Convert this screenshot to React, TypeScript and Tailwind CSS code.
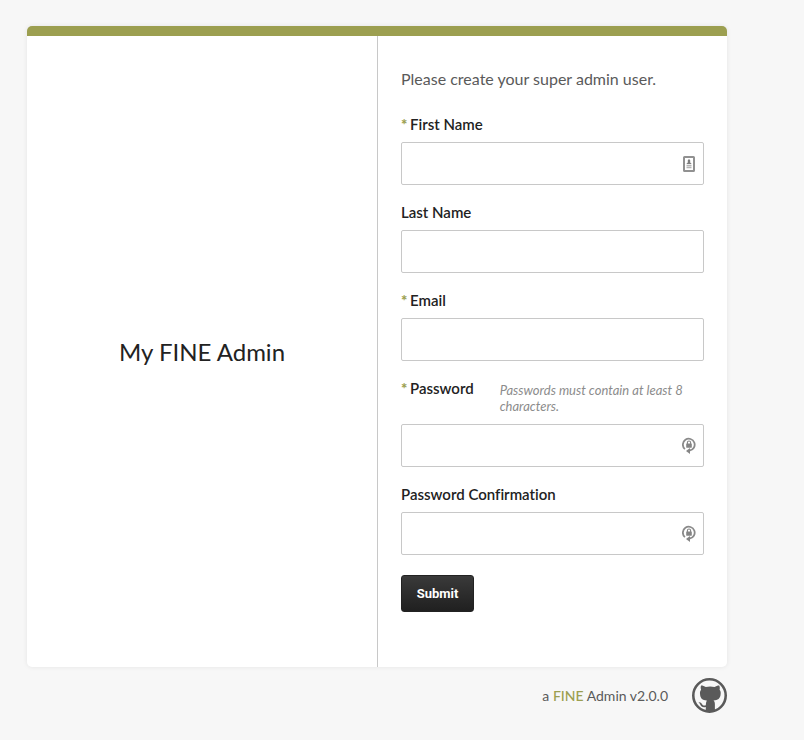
import type { ReactNode } from "react";

function ContactIcon() {
  return (
    <svg viewBox="0 0 12 16" className="h-4 w-3" aria-hidden="true">
      <rect x="1" y="1" width="10" height="14" rx="0.5" fill="#fff" stroke="#919191" strokeWidth="2" />
      <path d="M6 3l1.2 1.2v2.4l1.5 1.4H3.300l1.500-1.400V4.200z" fill="#7d7d7d" />
      <path d="M3.500 9.500h5M3.500 11.500h5" stroke="#b4b4b4" strokeWidth="1.400" />
    </svg>
  );
}

function KeyIcon() {
  return (
    <svg viewBox="0 0 14 17" className="h-[17px] w-[14px]" aria-hidden="true">
      <path d="M2.900 12.100A5.900 5.900 0 1 1 7.500 13.500" fill="none" stroke="#8a8a8a" strokeWidth="1.800" />
      <path d="M4 14l4-3v6z" fill="#858585" />
      <path d="M5.400 7V5.600a1.600 1.600 0 0 1 3.200 0V7" fill="none" stroke="#858585" strokeWidth="1.100" />
      <rect x="4.200" y="6.500" width="5.600" height="4.200" rx="0.400" fill="#858585" />
    </svg>
  );
}

function GithubLogo() {
  return (
    <svg viewBox="21 23 104 104" className="size-[35px]" aria-hidden="true">
      <circle cx="73" cy="75" r="48.200" fill="none" stroke="#5a5a5a" strokeWidth="7.600" />
      <path
        d="M48 45c5 0 10 2 14 5a60 60 0 0 1 26 0C92 47 97 45 102 45c2 5 2 9 1 13 3 4 4 8 3 14-1 12-8 17-21 18 3 3 4 6 4 11v23H62v-15c-9 2-14-1-17-8-1-3-3-5-5-6 6-1 9 2 11 6 2 4 7 4 11 3 0-5 1-10 3-14-13-1-19-6-20-18-1-6 0-10 3-14-1-4-2-8 0-13z"
        fill="#5a5a5a"
      />
    </svg>
  );
}

type FieldProps = {
  id: string;
  label: string;
  type?: string;
  required?: boolean;
  hint?: string;
  icon?: ReactNode;
};

function Field({ id, label, type = "text", required, hint, icon }: FieldProps) {
  return (
    <div className="flex flex-col gap-2">
      <div className="flex items-start">
        <label htmlFor={id} className="flex shrink-0 text-[15px] leading-5 font-semibold text-[#222]">
          {required && <span className="w-[9px] font-black text-[#9c9f50]">*</span>}
          {label}
        </label>
        {hint && (
          <p id={`${id}-hint`} className="ml-[26px] pt-1 pb-0.5 text-[13px] leading-4 text-[#8c8c8c] italic">
            {hint}
          </p>
        )}
      </div>
      <div className="relative">
        <input
          id={id}
          type={type}
          required={required}
          aria-describedby={hint ? `${id}-hint` : undefined}
          className="block h-[43px] w-full rounded-xs border border-[#c8c8c8] bg-white px-3 text-[15px] text-[#222]"
        />
        {icon && (
          <span className="pointer-events-none absolute inset-y-0 right-0 flex w-[30px] items-center justify-center">
            {icon}
          </span>
        )}
      </div>
    </div>
  );
}

export default function App() {
  return (
    <div className="min-h-screen bg-[#f7f7f7] px-[27px] pt-[26px] font-['Lato',sans-serif] text-[#5a5a5a] [font-variant-ligatures:no-common-ligatures]">
      <div className="max-w-[700px]">
        <main className="grid grid-cols-2 overflow-hidden rounded-[5px] border-t-[10px] border-[#9c9f50] bg-white shadow-[0_0_5px_rgba(0,0,0,0.08)]">
          <div className="flex items-center justify-center">
            <h1 className="text-2xl leading-8 text-[#222]">My FINE Admin</h1>
          </div>
          <form className="flex flex-col gap-[17px] border-l border-[#c8c8c8] px-[23px] pt-[31px] pb-[55px]">
            <p className="mb-[6px] text-base leading-6">Please create your super admin user.</p>
            <Field id="first-name" label="First Name" required icon={<ContactIcon />} />
            <Field id="last-name" label="Last Name" />
            <Field id="email" label="Email" type="email" required />
            <Field
              id="password"
              label="Password"
              type="password"
              required
              hint="Passwords must contain at least 8 characters."
              icon={<KeyIcon />}
            />
            <Field id="password-confirmation" label="Password Confirmation" type="password" icon={<KeyIcon />} />
            <button
              type="submit"
              className="mt-[3px] h-[37px] w-[73px] self-start rounded-[3px] border border-[#222] bg-linear-to-b from-[#3a3a3a] to-[#202020] font-['Roboto',sans-serif] text-[13px] leading-4 font-bold text-white"
            >
              Submit
            </button>
          </form>
        </main>
        <footer className="flex items-center justify-end gap-6 pt-[11px] text-sm leading-5">
          <p>
            a <a href="#fine" className="font-medium text-[#9c9f50]">FINE</a> Admin v2.0.0
          </p>
          <a href="#github" aria-label="GitHub">
            <GithubLogo />
          </a>
        </footer>
      </div>
    </div>
  );
}
